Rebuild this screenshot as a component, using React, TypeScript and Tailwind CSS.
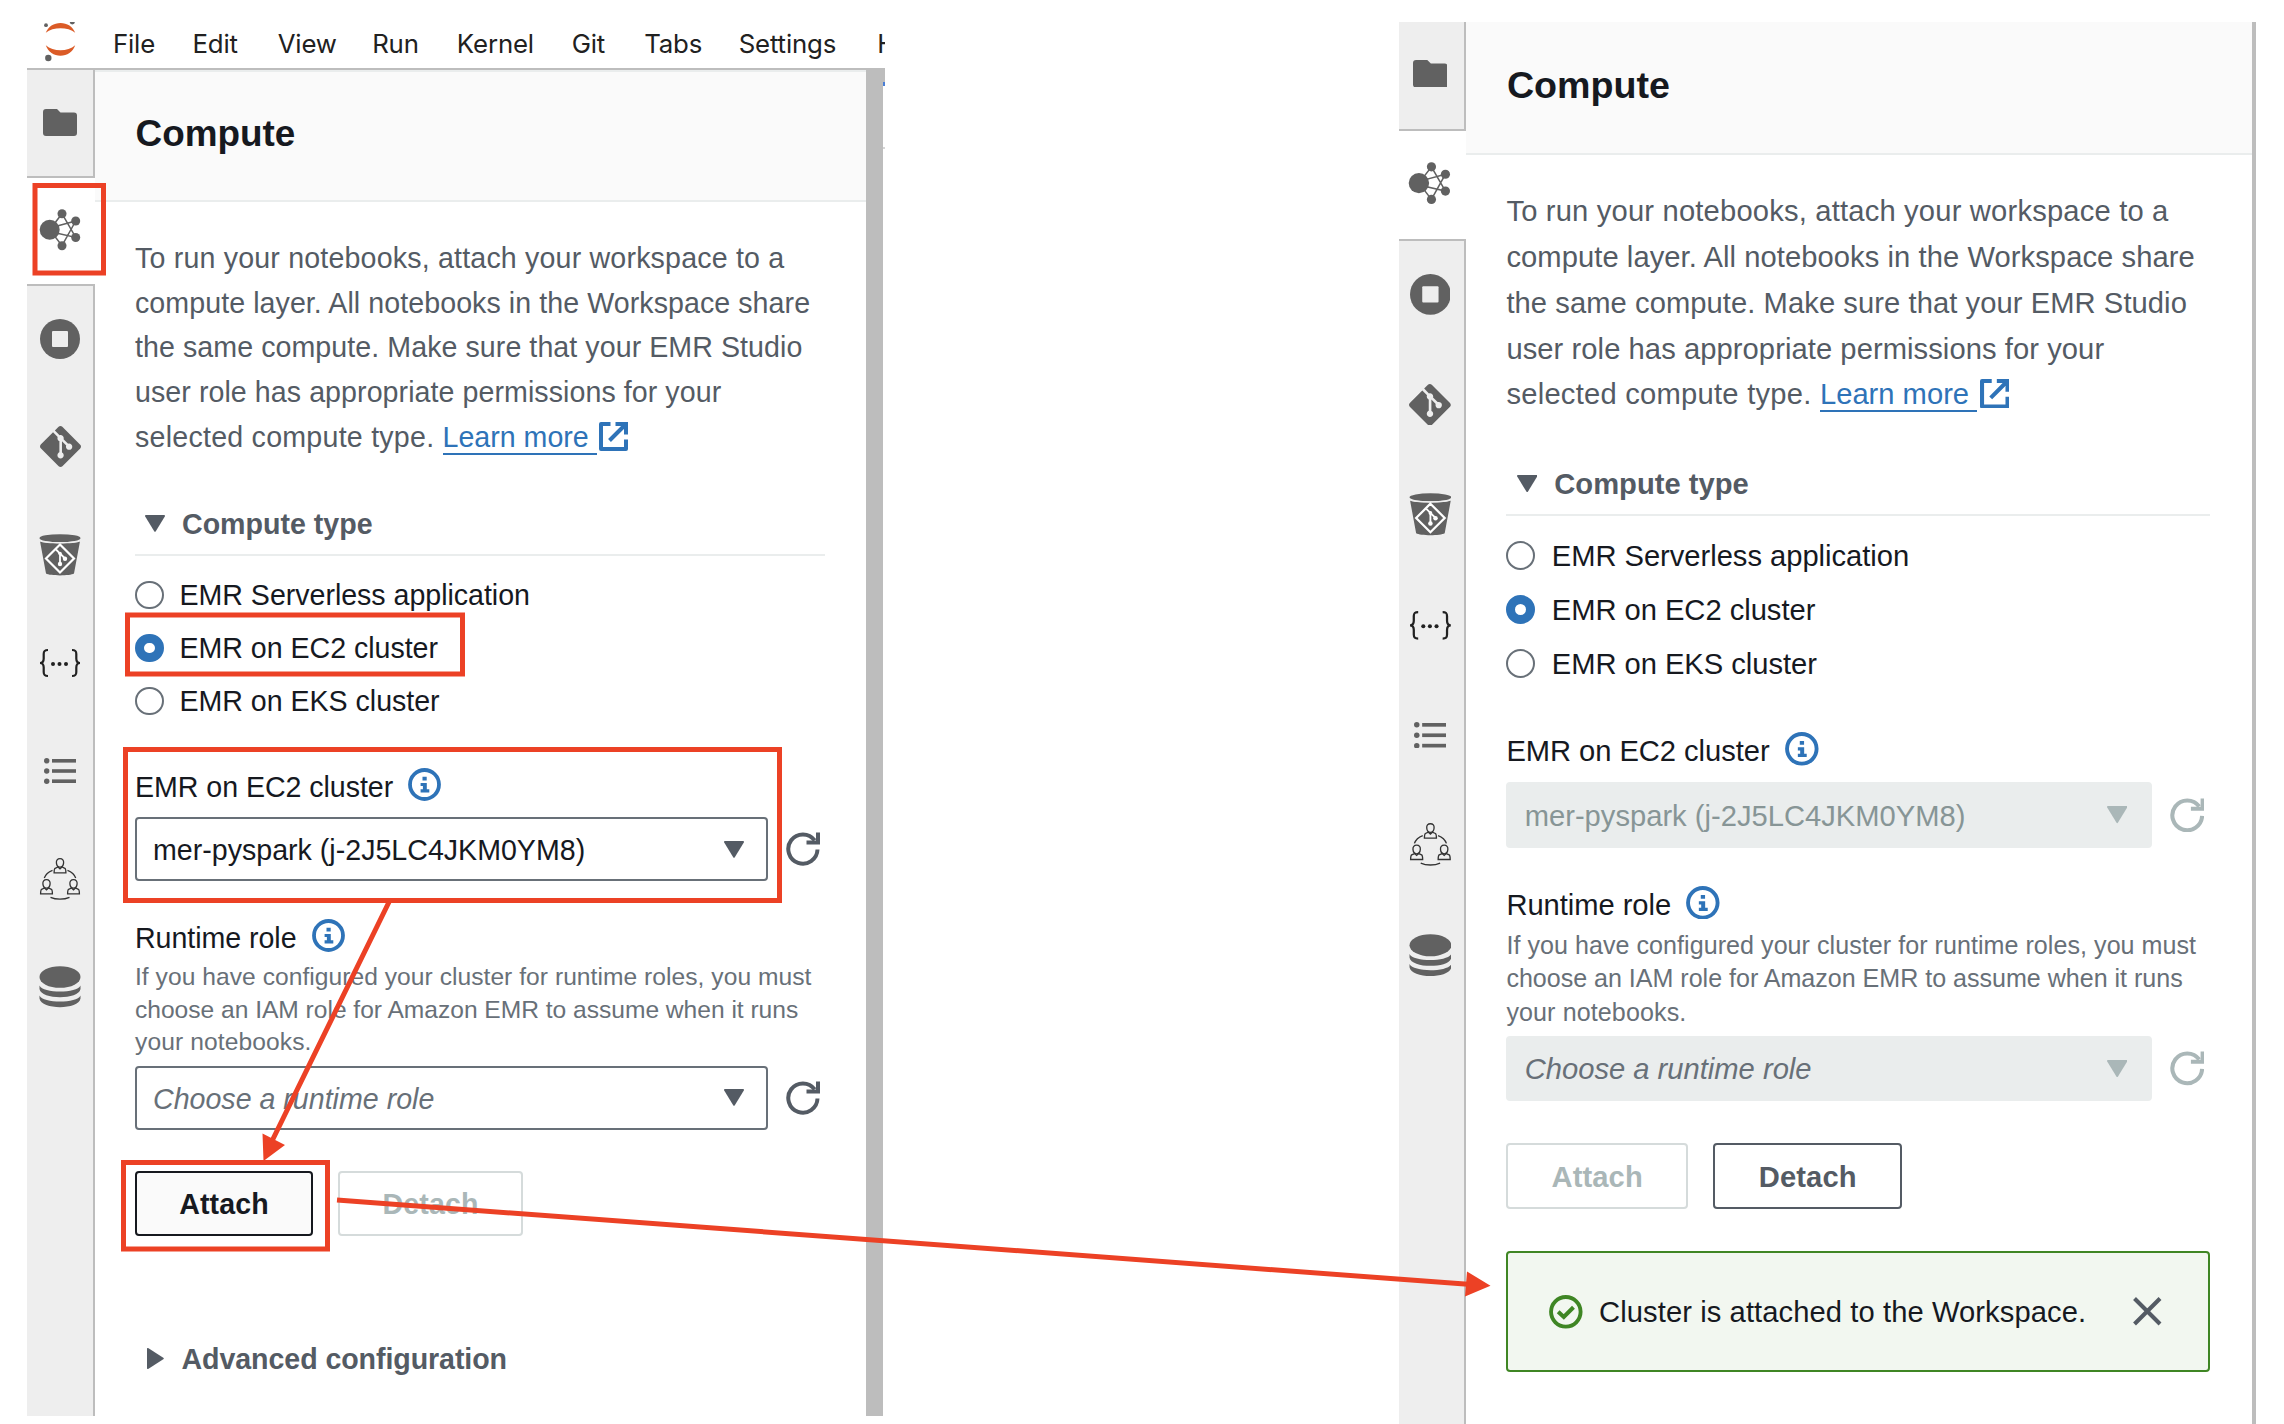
import React from 'react';
import { SiGit } from 'react-icons/si';

const FolderIcon = () => (
  <svg className="h-[27px] w-[34px] fill-[#616161]" viewBox="0 0 34 27">
    <path d="M3 0h11l3.5 3.5H31a3 3 0 0 1 3 3V24a3 3 0 0 1-3 3H3a3 3 0 0 1-3-3V3a3 3 0 0 1 3-3z" />
  </svg>
);

const ClusterIcon = () => (
  <svg className="h-[42px] w-[42px] fill-[#616161] stroke-[#616161]" viewBox="39 209 42 42">
    <path fill="none" strokeWidth="1.5" d="M49.7 229.7L62 213.7L75.7 237.5L49.7 231.5M49.7 229.7L62 245.7L75.7 221L49.7 228" />
    <g stroke="none">
      <circle cx="49.7" cy="229.7" r="10" />
      <circle cx="62" cy="213.7" r="4.5" />
      <circle cx="75.7" cy="221" r="4.5" />
      <circle cx="75.7" cy="237.5" r="4.5" />
      <circle cx="62" cy="245.7" r="4.5" />
    </g>
  </svg>
);

const StopIcon = () => (
  <svg className="h-10 w-10" viewBox="0 0 40 40">
    <circle cx="20" cy="20" r="20" fill="#616161" />
    <rect x="12" y="12" width="16" height="16" rx="1" fill="#eee" />
  </svg>
);

const BucketIcon = () => (
  <svg className="h-[42px] w-[42px]" viewBox="0 0 42 42">
    <path fill="#616161" d="M1 7.2C5 10.2 37 10.2 41 7.2L35 39.5C31 42 11 42 7 39.5z" />
    <ellipse cx="21" cy="4.2" rx="20.5" ry="4" fill="#616161" />
    <path fill="none" stroke="#eee" strokeWidth="1.2" d="M.5 6.5C5 9.300 37 9.300 41.500 6.500" />
    <path fill="none" stroke="#fff" strokeWidth="2.2" d="M21 10.5L35 24.5L21 38.5L7 24.5z" />
    <path fill="none" stroke="#fff" strokeWidth="1.8" d="M17 15.5L21 19.5V30M21 19.5L26 24.5" />
    <circle cx="21" cy="30" r="2.2" fill="#fff" />
    <circle cx="26" cy="24.8" r="2.2" fill="#fff" />
    <circle cx="21" cy="19.5" r="1.8" fill="#fff" />
  </svg>
);

const BracesIcon = () => (
  <svg className="mt-[1px] h-[30px] w-[42px]" viewBox="0 0 42 30" fill="none" stroke="#212121" strokeWidth="2.2">
    <path d="M9 2C5.5 2 4.7 3 4.7 6v4.500C4.700 13.500 3.500 15 1 15c2.500 0 3.700 1.500 3.700 4.500V24c0 3 .8 4 4.300 4" />
    <path d="M33 2c3.500 0 4.300 1 4.300 4v4.500c0 3 1.200 4.500 3.700 4.500-2.500 0-3.700 1.500-3.700 4.500V24c0 3-.8 4-4.300 4" />
    <g fill="#212121" stroke="none">
      <circle cx="14" cy="16" r="2" />
      <circle cx="20.500" cy="16" r="2" />
      <circle cx="27" cy="16" r="2" />
    </g>
  </svg>
);

const ListIcon = () => (
  <svg className="h-[26px] w-8 fill-[#616161]" viewBox="0 0 32 26">
    <circle cx="2.700" cy="2.800" r="2.700" />
    <circle cx="2.700" cy="13" r="2.700" />
    <circle cx="2.700" cy="23.200" r="2.700" />
    <rect x="8" y="1" width="24" height="3.600" />
    <rect x="8" y="11.200" width="24" height="3.600" />
    <rect x="8" y="21.400" width="24" height="3.600" />
  </svg>
);

const Person = ({ x, y }: { x: number; y: number }) => (
  <g transform={`translate(${x} ${y})`}>
    <path d="M6.500 .7c-2.600 0-3.800 1.800-3.600 4.200.2 2.500 1.700 4.300 3.600 4.300s3.400-1.800 3.600-4.300C10.300 2.500 9.100.7 6.500.7z" />
    <path d="M4.500 9L1.600 10.300C.9 10.700.6 11.500.6 14.800h11.800c0-3.300-.3-4.100-1-4.500L8.500 9L6.500 10.800z" />
  </g>
);

const PeopleIcon = () => (
  <svg className="h-[42px] w-[42px]" viewBox="0 0 42 42" fill="none" stroke="#333" strokeWidth="1.300">
    <Person x={14.500} y={0} />
    <Person x={1} y={21} />
    <Person x={28} y={21} />
    <path d="M13.500 12.300C9.500 13.800 6.500 16.500 5.300 20M28.500 12.300c4 1.500 7 4.200 8.200 7.700M11.500 39.300c5.500 2.500 13.500 2.500 19 0" />
  </svg>
);

const DatabaseIcon = () => (
  <svg className="h-[42px] w-[42px] fill-[#616161]" viewBox="0 0 42 42">
    <ellipse cx="21" cy="11" rx="20.500" ry="10.800" />
    <path d="M.5 19.500C4 27.500 38 27.500 41.500 19.500v3.500C40 34 2 34 .5 23z" />
    <path d="M.5 29.500C4 37.500 38 37.500 41.500 29.500v3C40 44 2 44 .5 32.500z" />
  </svg>
);

const CaretDown = ({ className }: { className: string }) => (
  <svg className={`h-[17px] w-5 shrink-0 ${className}`} viewBox="0 0 20 17" fill="currentColor">
    <path d="M1 0h18a1 1 0 0 1 .8 1.500l-9 14.800a1 1 0 0 1-1.600 0L.2 1.500A1 1 0 0 1 1 0z" />
  </svg>
);

const CaretRight = () => (
  <svg className="h-[21px] w-[17px] shrink-0" viewBox="0 0 17 21" fill="currentColor">
    <path d="M0 1a1 1 0 0 1 1.500-.8l14.800 9.500a1 1 0 0 1 0 1.600L1.500 20.800A1 1 0 0 1 0 20z" />
  </svg>
);

const InfoIcon = () => (
  <svg className="-mt-[5px] h-[33px] w-[33px]" viewBox="0 0 33 33">
    <circle cx="16.500" cy="16.500" r="14.500" fill="none" stroke="#2e73b8" strokeWidth="3.800" />
    <path fill="#2e73b8" d="M14.500 8.800h4.200v3.700h-4.200zM12.600 15h6.200v6.300h2.500v3.200h-8.700v-3.200h2.300v-3.200h-2.300z" />
  </svg>
);

const RefreshIcon = ({ className }: { className: string }) => (
  <svg className={`h-[34px] w-[34px] ${className}`} viewBox="0 0 34 34" fill="none" stroke="currentColor" strokeWidth="4">
    <path d="M31.500 17.500A14.600 14.600 0 1 1 28.700 8.400" />
    <path d="M32 .5V10.500H20.500" />
  </svg>
);

const ExternalIcon = () => (
  <svg className="ml-[2.500px] inline-block h-[29px] w-[29px] align-[-4px]" viewBox="0 0 29 29" fill="none" stroke="#2e73b8" strokeWidth="4">
    <path strokeLinejoin="round" d="M11.500 2H2v25h25V17.500" />
    <path d="M16.500 2H27v10.500M26.500 2.500L10.500 18.500" />
  </svg>
);

const JupyterLogo = () => (
  <svg className="h-[44px] w-[34px]" viewBox="43 18 34 44">
    <path fill="#db5b26" d="M45.800 32.800C48 26.500 54 22.900 60.500 22.900S73 26.500 75.200 32.800C71.500 29.500 66 28.200 60.500 28.200S49.500 29.500 45.800 32.800z" />
    <path fill="#db5b26" d="M45.800 45.300C48 52 54 55.700 60.500 55.700S73 52 75.200 45.300C71.500 48.800 66 50.300 60.500 50.300S49.500 48.800 45.800 45.300z" />
    <g fill="#616161">
      <circle cx="46" cy="25.200" r="1.900" />
      <circle cx="72.300" cy="21.800" r="2.600" />
      <circle cx="48.300" cy="58" r="3.200" />
    </g>
  </svg>
);

const sidebarIcons = [
  <FolderIcon />,
  <ClusterIcon />,
  <StopIcon />,
  <SiGit className="h-[41px] w-[41px] text-[#616161]" />,
  <BucketIcon />,
  <BracesIcon />,
  <ListIcon />,
  <PeopleIcon />,
  <DatabaseIcon />,
];

function Sidebar() {
  return (
    <nav className="flex w-[68px] shrink-0 flex-col">
      {sidebarIcons.map((icon, i) => (
        <div
          key={i}
          className={
            'flex h-[108px] w-[68px] shrink-0 items-center justify-center border-[#bdbdbd] ' +
            (i === 1
              ? 'border-b-2 bg-white pr-[2px] pb-[2px]'
              : i === 0
                ? 'border-r-2 border-b-2 bg-[#eee] pb-[2px]'
                : 'border-r-2 bg-[#eee] pb-[3px]')
          }
        >
          {icon}
        </div>
      ))}
      <div className="grow border-r-2 border-[#bdbdbd] bg-[#eee]" />
    </nav>
  );
}

function SelectRow({ text, placeholder, disabled }: { text: string; placeholder?: boolean; disabled: boolean }) {
  const textColor = placeholder ? 'italic text-[#687078]' : disabled ? 'text-[#879596]' : 'text-[#16191f]';
  return (
    <div className="flex h-[64px] items-center">
      <div
        className={
          'flex h-[64px] w-[633px] items-center justify-between rounded-[4px] border-2 pr-[22.500px] pl-[16px] ' +
          (disabled ? 'border-[#eaeded] bg-[#eaeded]' : 'border-[#687078] bg-white')
        }
      >
        <span className={`pt-[2px] ${textColor}`}>{text}</span>
        <CaretDown className={disabled ? 'text-[#aab7b8]' : 'text-[#545b64]'} />
      </div>
      <RefreshIcon className={disabled ? 'ml-[17.500px] text-[#aab7b8]' : 'ml-[17.500px] text-[#545b64]'} />
    </div>
  );
}

function ActionButton({ label, look, width }: { label: string; look: 'hover' | 'normal' | 'disabled'; width: string }) {
  const looks = {
    hover: 'border-[#16191f] bg-[#fafafa] text-[#16191f]',
    normal: 'border-[#545b64] bg-white text-[#545b64]',
    disabled: 'border-[#d5dbdb] bg-white text-[#aab7b8]',
  };
  return (
    <button className={`h-[65px] rounded-[4px] border-2 pt-[2px] font-bold tracking-[0.100px] ${width} ${looks[look]}`}>
      {label}
    </button>
  );
}

function Radio({ label, checked }: { label: string; checked?: boolean }) {
  return (
    <label className="flex h-[53px] items-center gap-[16px]">
      <span
        className={
          'h-[28.500px] w-[28.500px] rounded-full bg-white ' +
          (checked ? 'border-[9px] border-[#2e73b8]' : 'border-2 border-[#687078]')
        }
      />
      <span className="pt-[1px] tracking-[-0.030px]">{label}</span>
    </label>
  );
}

function ComputePanel({ attached }: { attached: boolean }) {
  return (
    <section className="flex w-[771px] shrink-0 flex-col bg-white font-['Liberation_Sans',Arial,sans-serif] text-[28.600px] leading-[40px] text-[#16191f]">
      <header className="flex h-[132px] shrink-0 items-center border-y-2 border-[#eaeded] bg-[#fafafa] pb-[4px] pl-[40.500px]">
        <h1 className="text-[36.900px] font-bold">Compute</h1>
      </header>
      <div className="flex w-[729.500px] flex-col pl-[40px]">
        <p className="mt-[33.700px] text-[28.600px] leading-[44.850px] tracking-[0.065px] whitespace-nowrap text-[#545b64]">
          <span className="tracking-[0.180px]">To run your notebooks, attach your workspace to a</span><br />
          compute layer. All notebooks in the Workspace share<br />
          the same compute. Make sure that your EMR Studio<br />
          user role has appropriate permissions for your<br />
          <span className="tracking-[0.240px]">selected compute type. </span>
          <a className="border-b-2 border-[#2e73b8] tracking-[0px] whitespace-pre text-[#2e73b8]">{'Learn more '}</a>
          <ExternalIcon />
        </p>
        <h2 className="mt-[34px] flex h-[62px] items-center gap-[17px] border-b-2 border-[#eaeded] pl-[10px] font-bold text-[#545b64]">
          <CaretDown className="" />
          <span className="pt-[1px]">Compute type</span>
        </h2>
        <div className="mt-[12.500px]">
          <Radio label="EMR Serverless application" />
          <Radio label="EMR on EC2 cluster" checked />
          <Radio label="EMR on EKS cluster" />
        </div>
        <div className="mt-[39.500px] mb-[10.300px] flex h-10 items-center gap-[15px] tracking-[-0.050px]">
          EMR on EC2 cluster
          <InfoIcon />
        </div>
        <SelectRow text="mer-pyspark (j-2J5LC4JKM0YM8)" disabled={attached} />
        <div className="mt-[36.300px] flex h-10 items-center gap-[15px] tracking-[-0.050px]">
          Runtime role
          <InfoIcon />
        </div>
        <p className="mt-[3.400px] mb-[6.700px] text-[24.600px] leading-[32.700px] tracking-[-0.020px] whitespace-nowrap text-[#687078]">
          <span className="tracking-[0.040px]">If you have configured your cluster for runtime roles, you must</span><br />
          choose an IAM role for Amazon EMR to assume when it runs<br />
          <span className="tracking-[0.100px]">your notebooks.</span>
        </p>
        <SelectRow text="Choose a runtime role" placeholder disabled={attached} />
        <div className="mt-[41.300px] flex gap-[25px]">
          <ActionButton label="Attach" look={attached ? 'disabled' : 'hover'} width="w-[178px]" />
          <ActionButton label="Detach" look={attached ? 'normal' : 'disabled'} width="w-[185px]" />
        </div>
        {attached ? (
          <div className="mt-[41px] flex h-[118.500px] items-center rounded-[4px] border-2 border-[#3f8624] bg-[#f2f7f0] pl-[40px]">
            <svg className="h-[33px] w-[33px]" viewBox="0 0 33 33" fill="none" stroke="#3f8624">
              <circle cx="16.500" cy="16.500" r="14.500" strokeWidth="3.800" />
              <path strokeWidth="4" d="M9 16.500l5.500 5L24 12" />
            </svg>
            <span className="ml-[16px] w-[524px] pt-[1px] tracking-[0.080px] whitespace-nowrap">
              Cluster is attached to the Workspace.
            </span>
            <svg className="h-[28px] w-[28px]" viewBox="0 0 28 28" stroke="#545b64" strokeWidth="4">
              <path d="M1.500 1.500l25 25M26.500 1.500l-25 25" />
            </svg>
          </div>
        ) : (
          <div className="mt-[103px] flex h-10 items-center gap-[18px] pl-[11.500px] font-bold tracking-[-0.080px] text-[#545b64]">
            <CaretRight />
            Advanced configuration
          </div>
        )}
      </div>
    </section>
  );
}

const menuItems = [
  { label: 'File', width: 'w-[79.600px]' },
  { label: 'Edit', width: 'w-[85.200px]' },
  { label: 'View', width: 'w-[94.500px]' },
  { label: 'Run', width: 'w-[84.700px]' },
  { label: 'Kernel', width: 'w-[114.800px]' },
  { label: 'Git', width: 'w-[72.500px]' },
  { label: 'Tabs', width: 'w-[94.500px]' },
  { label: 'Settings', width: 'w-[138.500px]' },
  { label: 'Help', width: 'w-[60px]' },
];

function MenuBar() {
  return (
    <div className="flex h-[48px] shrink-0 items-start border-b-2 border-[#bdbdbd] pl-4">
      <div className="-mt-[4px] w-[69.900px] shrink-0">
        <JupyterLogo />
      </div>
      {menuItems.map((m) => (
        <span
          key={m.label}
          className={`mt-[2px] shrink-0 font-['Inter',sans-serif] text-[25.800px] leading-[40px] tracking-[-0.150px] text-[#212121] ${m.width}`}
        >
          {m.label}
        </span>
      ))}
    </div>
  );
}

/* Red frames and arrows that walk through the attach steps. */
function Annotations() {
  return (
    <svg className="pointer-events-none absolute inset-0 h-[1424px] w-[2284px]" viewBox="0 0 2284 1424">
      <g fill="none" stroke="#ec4125" strokeWidth="5">
        <rect x="35" y="185.500" width="68.500" height="87.500" />
        <rect x="127.500" y="615" width="335" height="59" />
        <rect x="125.500" y="749.500" width="654" height="151" />
        <rect x="123.500" y="1162.500" width="204" height="86.500" />
        <path d="M389 902L272 1141M337 1200L1468 1284.300" />
      </g>
      <path fill="#ec4125" d="M262.500 1133.500L285 1145L263.500 1161zM1467 1271.500L1490.500 1285.700L1465 1296.500z" />
    </svg>
  );
}

export default function App() {
  return (
    <main className="relative flex h-[1424px] w-[2284px] items-start justify-between overflow-hidden bg-white pt-[22px] pr-7 pl-[27px]">
      <div className="flex h-[1393.500px] w-[858px] flex-col overflow-clip [overflow-clip-margin:0px]">
        <div className="-mt-[22px] overflow-hidden pt-[22px]">
          <MenuBar />
        </div>
        <div className="flex min-h-0 grow overflow-hidden">
          <Sidebar />
          <ComputePanel attached={false} />
          <div className="w-[17px] shrink-0 bg-[#bdbdbd]" />
          <div className="w-[2px] shrink-0">
            <div className="h-3 bg-[#bdbdbd]" />
            <div className="h-1 bg-[#4a7fd6]" />
            <div className="mt-[61px] h-[2px] bg-[#d5d5d5]" />
          </div>
        </div>
      </div>
      <div className="h-[1402px] w-[857px] overflow-hidden">
        <div className="-mt-[1.500px] -ml-[2.700px] flex h-[1380px] w-[860px] [zoom:1.0198]">
          <Sidebar />
          <ComputePanel attached />
          <div className="w-[17px] shrink-0 bg-[#bdbdbd]" />
        </div>
      </div>
      <Annotations />
    </main>
  );
}
